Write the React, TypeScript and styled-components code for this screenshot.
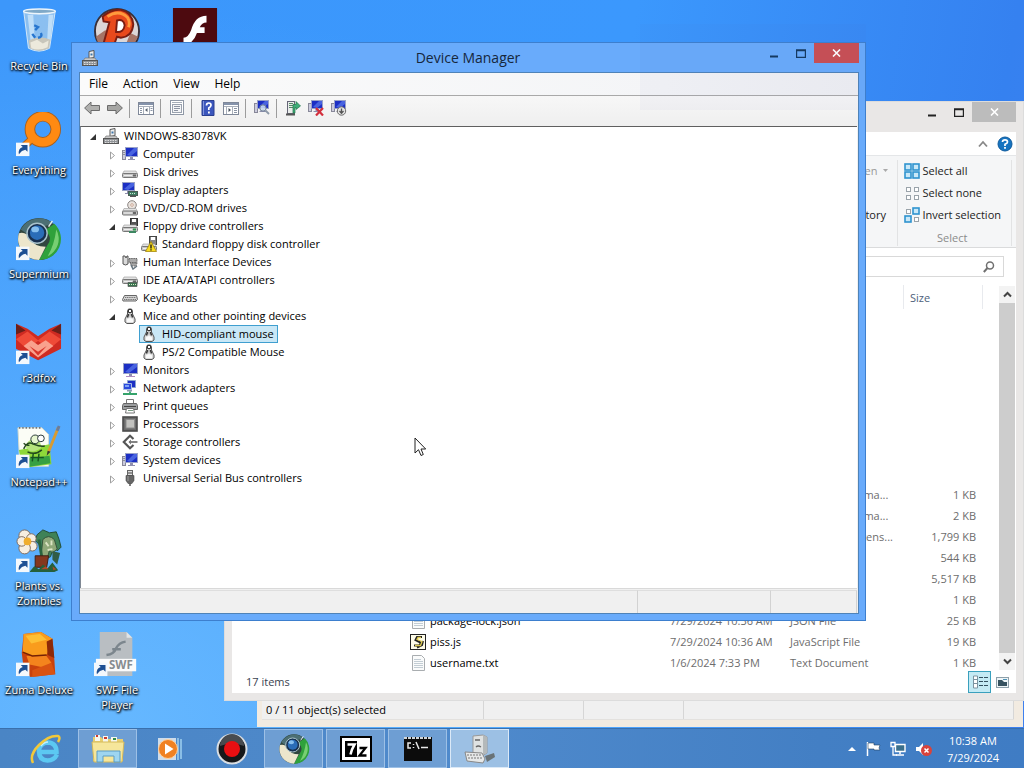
import React from "react";
import styled, { createGlobalStyle, css } from "styled-components";

const Global = createGlobalStyle`
  * { box-sizing: border-box; }
  html, body { margin: 0; padding: 0; }
  body, button, input, table {
    font-family: "Open Sans", "Noto Sans", sans-serif;
    font-size: 11px;
    line-height: 16px;
    color: #000;
  }
  button { border: 0; padding: 0; margin: 0; background: none; }
  ul { list-style: none; margin: 0; padding: 0; }
  svg { display: block; flex: none; }
`;

/* ---------- desktop ---------- */

const Screen = styled.div`
  display: flex;
  flex-direction: column;
  height: 100vh;
  overflow: hidden;
  background:
    radial-gradient(ellipse at 10% 95%, #66b8ff 0%, rgba(102, 184, 255, 0) 70%),
    linear-gradient(100deg, #3c97fb 0%, #3b98fd 55%, #3581f0 88%, #3f80ee 100%);
`;

const Area = styled.main`
  position: relative;
  flex: 1;
  min-height: 0;
`;

const IconGrid = styled.div`
  display: grid;
  grid-template-columns: repeat(3, 78px);
  grid-auto-rows: 104px;
  padding-top: 8px;
`;

const Shortcut = styled.button<{ $col: number; $row: number }>`
  grid-column: ${(p) => p.$col};
  grid-row: ${(p) => p.$row};
  display: flex;
  flex-direction: column;
  align-items: center;
  gap: 4px;
  padding: 0 2px;
  color: #fff;
  line-height: 15px;
  text-align: center;
  text-shadow: 0 1px 2px #000, 1px 1px 2px #000, 0 0 3px rgba(0, 0, 0, 0.7);
`;

/* ---------- window frames ---------- */

const winButton = css`
  display: flex;
  align-items: center;
  justify-content: center;
`;

const ArchiveWindow = styled.section`
  position: absolute;
  left: 257px;
  right: 1px;
  top: 140px;
  bottom: 1px;
  display: flex;
  flex-direction: column;
  justify-content: flex-end;
  padding: 0 9px 7px 5px;
  background: #f2ebe1;
`;

const ArchiveStatus = styled.div`
  display: flex;
  height: 20px;
  background: #f0f0f0;
  border-bottom: 1px solid #e3e1de;
`;

const ArchiveCell = styled.span<{ $width?: number }>`
  flex: ${(p) => (p.$width ? `0 0 ${p.$width}px` : "1")};
  padding: 2px 4px;
  border-right: 1px solid #d6d6d6;
`;

const Explorer = styled.section`
  position: absolute;
  left: 224px;
  right: 0;
  top: 101px;
  bottom: 27px;
  display: flex;
  flex-direction: column;
  padding: 0 7px 7px;
  background: #e9e7e6;
  border: 1px solid #dcdcdc;
`;

const ExplorerTitle = styled.header`
  display: flex;
  justify-content: flex-end;
  height: 30px;
`;

const ExplorerButton = styled.button<{ $close?: boolean }>`
  ${winButton}
  width: ${(p) => (p.$close ? 44 : 27)}px;
  height: 20px;
  background: ${(p) => (p.$close ? "#bcbcbc" : "transparent")};
`;

const TabRow = styled.div`
  display: flex;
  align-items: center;
  justify-content: flex-end;
  gap: 9px;
  height: 23px;
  padding-right: 3px;
  background: #fff;
`;

const Ribbon = styled.div`
  display: flex;
  justify-content: flex-end;
  height: 93px;
  padding: 4px 4px 1px;
  background: #f5f6f7;
  border-top: 1px solid #e4e6e8;
  border-bottom: 1px solid #dadbdc;
`;

const RibbonGroup = styled.div<{ $gap: number }>`
  display: flex;
  flex-direction: column;
  padding: 0 ${(p) => p.$gap}px 0 6px;
  border-right: 1px solid #e2e3e4;
`;

const RibbonButton = styled.button<{ $dim?: boolean }>`
  display: flex;
  align-items: center;
  gap: 3px;
  height: 22px;
  color: ${(p) => (p.$dim ? "#999" : "#222")};
`;

const RibbonCaption = styled.span`
  margin-top: auto;
  text-align: center;
  color: #8b8b8b;
`;

const AddressRow = styled.div`
  display: flex;
  justify-content: flex-end;
  padding: 8px 12px;
  background: #fff;
`;

const SearchBox = styled.label`
  display: flex;
  align-items: center;
  width: 220px;
  height: 21px;
  padding-right: 8px;
  border: 1px solid #d9d9d9;
`;

const SearchInput = styled.input`
  flex: 1;
  min-width: 0;
  border: 0;
  padding: 0 4px;
  outline: 0;
  background: transparent;
`;

const Body = styled.div`
  display: flex;
  flex: 1;
  min-height: 0;
  padding-left: 172px;
  background: #fff;
`;

const Listing = styled.div`
  display: flex;
  flex: 1;
  flex-direction: column;
  justify-content: space-between;
`;

const ColumnHeads = styled.div`
  display: flex;
  justify-content: flex-end;
  height: 24px;
  margin-right: 16px;
`;

const ColumnHead = styled.span<{ $width: number }>`
  width: ${(p) => p.$width}px;
  padding: 5px 6px;
  color: #4c607a;
  border-left: 1px solid #e8eaee;
  &:last-child { border-right: 1px solid #e8eaee; }
`;

const FileTable = styled.table`
  width: 100%;
  border-collapse: collapse;
  table-layout: fixed;
`;

const FileCell = styled.td<{ $right?: boolean; $name?: boolean }>`
  height: 21px;
  padding: 0 6px;
  padding-right: ${(p) => (p.$right ? 23 : 0)}px;
  text-align: ${(p) => (p.$right ? "right" : "left")};
  color: ${(p) => (p.$name ? "#000" : "#6d6d6d")};
  white-space: nowrap;
`;

const FileName = styled.span`
  display: flex;
  align-items: center;
  gap: 4px;
`;

const ScrollBar = styled.div`
  display: flex;
  flex-direction: column;
  width: 17px;
  padding: 1px 1px 3px 0;
`;

const ScrollButton = styled.button`
  ${winButton}
  height: 17px;
  background: #f3f3f3;
`;

const ScrollThumb = styled.div`
  flex: 1;
  background: #cdcdcd;
`;

const ExplorerStatus = styled.footer`
  display: flex;
  align-items: center;
  height: 20px;
  padding: 0 2px 2px 14px;
  background: #fff;
  color: #3a4250;
`;

const ViewButton = styled.button<{ $active?: boolean }>`
  ${winButton}
  width: 23px;
  height: 22px;
  border: 1px solid ${(p) => (p.$active ? "#3aa0bd" : "transparent")};
  background: ${(p) => (p.$active ? "#c4eaf4" : "transparent")};
`;

const Grow = styled.span`
  flex: 1;
`;

/* ---------- device manager ---------- */

const Manager = styled.section`
  position: absolute;
  left: 71px;
  right: 158px;
  top: 42px;
  bottom: 107px;
  display: flex;
  flex-direction: column;
  padding: 0 6px 6px 7px;
  background: #69abfb;
  border: 1px solid #3d7fce;
`;

const ManagerTitle = styled.header`
  display: grid;
  grid-template-columns: 108px 1fr 110px;
  height: 29px;
`;

const TitleIcon = styled.span`
  padding: 7px 3px;
`;

const TitleText = styled.h1`
  margin: 0;
  padding-top: 4px;
  font-size: 14px;
  font-weight: 400;
  line-height: 21px;
  text-align: center;
  color: #16273c;
`;

const TitleButtons = styled.div`
  display: flex;
  justify-content: flex-end;
`;

const ManagerButton = styled.button<{ $close?: boolean }>`
  ${winButton}
  width: ${(p) => (p.$close ? 45 : 27)}px;
  height: 20px;
  background: ${(p) => (p.$close ? "#c94f53" : "transparent")};
`;

const Client = styled.div`
  display: flex;
  flex: 1;
  flex-direction: column;
  min-height: 0;
  background: #f0f0f0;
  border: 1px solid #4f83b8;
`;

const MenuBar = styled.nav`
  display: flex;
  height: 23px;
  padding-left: 2px;
  background: linear-gradient(90deg, #fbfbfb, #f4f5f7 75%, #eff0f3);
  border-bottom: 1px solid #a9a9a9;
`;

const MenuItem = styled.button`
  padding: 0 8px 0 7px;
  font-size: 12px;
`;

const ToolBar = styled.div`
  display: flex;
  align-items: center;
  height: 30px;
  padding-bottom: 6px;
  background: linear-gradient(#f7f7f7, #efefef);
`;

const ToolButton = styled.button`
  ${winButton}
  width: 23px;
  height: 22px;
`;

const Divider = styled.span`
  width: 1px;
  height: 19px;
  margin: 0 4px 0 3px;
  background: #9c9c9c;
`;

const TreePane = styled.div`
  flex: 1;
  min-height: 0;
  margin-right: 1px;
  overflow: hidden;
  background: #fff;
  border-top: 1px solid #5f5f5f;
  border-left: 1px solid #7f8894;
`;

const TreeRow = styled.li<{ $level: number }>`
  display: flex;
  align-items: center;
  height: 18px;
  padding-left: ${(p) => 7 + p.$level * 19}px;
`;

const Expander = styled.span`
  ${winButton}
  width: 10px;
  height: 16px;
  padding-top: 2px;
  margin-right: 3px;
`;

const TreeItem = styled.button<{ $selected?: boolean }>`
  display: flex;
  align-items: center;
  gap: 5px;
  height: 18px;
  padding: 0 3px 0 1px;
  border: 1px solid ${(p) => (p.$selected ? "#3f9fd0" : "transparent")};
  background: ${(p) => (p.$selected ? "#c9e7f6" : "transparent")};
  white-space: nowrap;
`;

const StatusBar = styled.footer`
  display: grid;
  grid-template-columns: 1fr 133px 86px;
  height: 25px;
  margin-right: 1px;
  padding-top: 1px;
  border-top: 1px solid #d9d9d9;
`;

const StatusCell = styled.span`
  border-top: 1px solid #dedede;
  border-right: 1px solid #d2d2d2;
`;

const Ghost = styled.div`
  position: absolute;
  right: 158px;
  top: 24px;
  width: 226px;
  height: 86px;
  background: rgba(110, 110, 170, 0.04);
  pointer-events: none;
`;

const Pointer = styled.div`
  position: absolute;
  left: 414px;
  top: 437px;
`;

/* ---------- taskbar ---------- */

const TaskBar = styled.footer`
  position: relative;
  display: flex;
  flex: none;
  align-items: stretch;
  height: 40px;
  padding-left: 16px;
  background: linear-gradient(90deg, #4a85c5, #4f8acc 45%, #437fc4 80%, #3f7cc4);
  border-top: 1px solid #3a70ac;
`;

const Tasks = styled.div`
  display: flex;
  flex: 1;
  gap: 3px;
`;

const Task = styled.button<{ $state?: "open" | "active" }>`
  ${winButton}
  width: 59px;
  border: 1px solid transparent;
  ${(p) => p.$state === "open" && css`background: #6e9ed3; border-color: #9dc0e6;`}
  ${(p) => p.$state === "active" && css`background: #9cc0e4; border-color: #dbe9f7;`}
`;

const Tray = styled.div`
  display: flex;
  align-items: center;
  gap: 9px;
  padding-right: 24px;
`;

const Clock = styled.time`
  width: 54px;
  margin-left: 4px;
  line-height: 17px;
  text-align: center;
  white-space: nowrap;
  color: #fff;
`;

/* ---------- device drawings, all on a 16 unit grid ---------- */

const Monitor = ({ x = 0, y = 0, w = 12, h = 8 }) => (
  <g>
    <rect x={x + 0.5} y={y + 0.5} width={w} height={h} fill="#1c2fc4" stroke="#9aa2c8" />
    <path d={`M${x + 2} ${y + h - 1}L${x + w - 3} ${y + 1}H${x + w}V${y + 4}L${x + 6} ${y + h}Z`} fill="#4863e0" />
    <path d={`M${x + w / 2 - 1} ${y + h + 1}h3v2h2v1h-7v-1h2z`} fill="#8f8fae" />
  </g>
);

const Drive = ({ x = 0, y = 9, green = false }) => (
  <g>
    <path d={`M${x + 2} ${y}H${x + 14}L${x + 15.5} ${y + 3}H${x + 0.5}Z`} fill="#e3e3e3" stroke="#999" strokeWidth=".6" />
    <rect x={x + 0.5} y={y + 2.5} width="15" height="4" rx="1" fill="#c4c4c4" stroke="#777" />
    <path d={`M${x + 2} ${y + 4.5}h8`} stroke="#eee" />
    <rect x={x + 11} y={y + 3.5} width="3" height="2" fill={green ? "#2c9a4b" : "#666"} />
  </g>
);

const MouseBody = () => (
  <g>
    <path d="M5.500 3l1-2h3l1 2v3l2.500 5v3L11 15.500H5L3 14v-3l2.500-5z" fill="#dcdcdc" stroke="#555" />
    <path d="M6.500 1.500h3v3h-3z" fill="#fff" stroke="#333" />
    <path d="M6.500 6L5.500 9.500M9.500 6l1 3.500" stroke="#333" strokeWidth="1.500" />
    <path d="M5 11.500q3-3 6 0V14H5z" fill="#fafafa" />
    <path d="M8 5v3.500" stroke="#999" />
  </g>
);

const drawings: Record<string, React.ReactNode> = {
  root: (
    <g>
      <path d="M7 1.500l5-1v7l-5 1z" fill="#eee" stroke="#555" />
      <path d="M8.500 3.500h2v2h-2z" fill="#3c75a8" />
      <path d="M3 8h10l2 3H1z" fill="#c9c9c9" stroke="#777" strokeWidth=".7" />
      <rect x=".5" y="10.500" width="15" height="5" fill="#8f9296" stroke="#555" />
      <path d="M2 12.500h12M2 14.500h12" stroke="#ddd" strokeDasharray="1.500 1" />
    </g>
  ),
  computer: (
    <g>
      <rect x=".5" y="4.500" width="3" height="9" fill="#ccd" stroke="#889" />
      <path d="M1.500 6.500h1M1.500 8.500h1" stroke="#555" />
      <Monitor x={3} y={1} w={12} h={9} />
    </g>
  ),
  disk: <Drive y={7} />,
  display: (
    <g>
      <Monitor x={0} y={0} w={12} h={8} />
      <rect x="6.500" y="9.500" width="9" height="4" fill="#3f7f63" stroke="#4b5b55" />
      <path d="M8 11.500h6" stroke="#cfe6d7" strokeDasharray="1 1" />
      <path d="M8 14.500h6" stroke="#555" />
    </g>
  ),
  dvd: (
    <g>
      <circle cx="10" cy="5" r="4.300" fill="#e9e3de" stroke="#8b8582" />
      <circle cx="10" cy="5" r="1.300" fill="#fff" stroke="#b98a70" strokeWidth=".7" />
      <Drive y={8.500} />
    </g>
  ),
  floppyCtl: (
    <g>
      <rect x="8.500" y=".5" width="7" height="7" fill="#555" stroke="#333" />
      <path d="M10 1h4v3h-4z" fill="#fff" />
      <Drive y={7} green />
      <path d="M7 13h7v2H7z" fill="#3d8762" />
    </g>
  ),
  floppyWarn: (
    <g>
      <rect x="8.500" y=".5" width="7" height="8" fill="#888" stroke="#444" />
      <path d="M10 1h4v3h-4z" fill="#fff" />
      <Drive y={8} />
      <path d="M10 5.500l5.500 10h-11z" fill="#f8dc20" stroke="#a5860c" strokeWidth=".8" />
      <path d="M10 8.500v4M10 13.300v1.200" stroke="#111" strokeWidth="1.300" />
    </g>
  ),
  hid: (
    <g>
      <path d="M1 2h2l1 2 1-2h1v8q-2.500 2-5 0z" fill="#d9d9d9" stroke="#555" />
      <path d="M7 4.500h8v4H7zM8 9h7l-1 3h-4z" fill="#aaa" stroke="#666" strokeDasharray="1.500 .7" />
      <path d="M9 11l2 4 4-3" fill="none" stroke="#66757f" strokeWidth="1.500" />
    </g>
  ),
  ide: (
    <g>
      <Drive y={5} />
      <path d="M6 10.500h9v4H6z" fill="#39744f" stroke="#555" strokeWidth=".7" />
      <path d="M7 12.500h7" stroke="#d6e8c8" strokeDasharray="1 1" />
    </g>
  ),
  keyboard: (
    <g>
      <path d="M2.500 5.500h12l1 4-1.500 1.500H1L.5 9.500z" fill="#d4d4d4" stroke="#666" />
      <path d="M3 7.500h11M2 9.500h12" stroke="#777" strokeDasharray="1.200 .6" />
    </g>
  ),
  mouse: <MouseBody />,
  monitor: (
    <g>
      <Monitor x={1} y={1} w={14} h={10} />
      <path d="M4 14.500h9" stroke="#b08cc0" />
    </g>
  ),
  network: (
    <g>
      <path d="M5.500.5h8v7h-8z" fill="#1c2fc4" stroke="#8aa4d0" />
      <path d="M1.500 3.500h8v6h-8z" fill="#2a49dc" stroke="#a9bbe4" />
      <path d="M3 5h4v2H3z" fill="#7fa3f4" />
      <path d="M5 10h5v1.500H5z" fill="#8f9ab0" />
      <path d="M1 14h14M8 11.500v3" stroke="#35a36b" strokeWidth="1.800" />
    </g>
  ),
  printer: (
    <g>
      <path d="M4.500 1.500h7v4h-7z" fill="#fff" stroke="#777" />
      <path d="M1.500 5.500h13l1 2v4H.5v-4z" fill="#9c9ea0" stroke="#666" />
      <path d="M2 8.500h12" stroke="#444" />
      <path d="M4.500 10.500h7l1 4.500h-9z" fill="#fff" stroke="#777" />
      <path d="M6 12.500h5" stroke="#7a9b84" />
    </g>
  ),
  cpu: (
    <g>
      <rect x="1" y="1" width="14" height="14" fill="#6b6b6b" stroke="#4b4b4b" strokeWidth="1.600" />
      <rect x="4" y="3.500" width="8.500" height="8.500" fill="#c2c2bf" stroke="#8c8c8c" />
    </g>
  ),
  storage: (
    <g fill="none">
      <path d="M11.500 5L8 1.800 1.800 8 8 14.200 11.500 11" stroke="#555" strokeWidth="2.200" />
      <path d="M7 8h8.500" stroke="#777" strokeWidth="1.800" />
      <path d="M9 5.500L6.500 8 9 10.500z" fill="#777" />
    </g>
  ),
  usb: (
    <g>
      <rect x="5.500" y=".5" width="5" height="5" fill="#ddd" stroke="#666" />
      <path d="M7 2v2M9 2v2" stroke="#444" />
      <path d="M4 5.500h8v5l-2 3H6l-2-3z" fill="#666" stroke="#4a4a4a" strokeWidth=".6" />
      <path d="M6 6v5" stroke="#9a9a9a" />
      <path d="M8 13v3" stroke="#555" strokeWidth="1.500" />
    </g>
  ),
  back: <path d="M.6 8L7 2v3.500h8.500v5H7V14z" fill="#b0b0ae" stroke="#6b6b6b" />,
  forward: <path d="M15.400 8L9 2v3.500H.5v5H9V14z" fill="#a5a5a3" stroke="#6b6b6b" />,
  panel: (
    <g>
      <rect x=".5" y="2.500" width="15" height="12" fill="#fff" stroke="#7f8899" />
      <path d="M1 4h14" stroke="#8593ab" strokeWidth="2" />
      <path d="M5.500 6v8M11.500 6v8M1 6.500h14" stroke="#a9b0bb" />
      <path d="M2 8.500h2M2 10.500h2M2 12.500h2M12.500 8.500h2M12.500 10.500h2" stroke="#8b95a5" />
      <path d="M9.500 8v4L7 10z" fill="#55606e" />
    </g>
  ),
  panelRight: (
    <g>
      <rect x=".5" y="2.500" width="15" height="12" fill="#fff" stroke="#7f8899" />
      <path d="M1 4h14" stroke="#8593ab" strokeWidth="2" />
      <path d="M3.500 6v8M9.500 6v8M1 6.500h14" stroke="#a9b0bb" />
      <path d="M11 8.500h3M11 10.500h3M11 12.500h3" stroke="#8b95a5" />
      <path d="M5.500 8v4L8 10z" fill="#44505e" />
    </g>
  ),
  properties: (
    <g>
      <rect x="1.500" y=".5" width="13" height="14" fill="#fff" stroke="#8f98a6" />
      <path d="M3 2.500h10" stroke="#a6aeb9" />
      <rect x="3.500" y="4.500" width="9" height="8" fill="#f4f5f7" stroke="#9aa2af" />
      <path d="M5 6.500h6M5 8.500h6M5 10.500h4" stroke="#8b93a2" />
    </g>
  ),
  help: (
    <g>
      <path d="M2 .5h12v15H2z" fill="#3b56bd" stroke="#2a3e8e" />
      <path d="M3.500 1v14" stroke="#8395dc" />
      <path d="M6.500 5.500Q6.500 3 8.800 3T11 5.300Q11 6.800 8.800 8v2" fill="none" stroke="#fff" strokeWidth="1.700" />
      <path d="M8 11.500h1.800v2H8z" fill="#fff" />
    </g>
  ),
  scan: (
    <g>
      <rect x=".5" y="3.500" width="3" height="9" fill="#ccd" stroke="#889" />
      <Monitor x={3} y={0} w={11} h={8} />
      <circle cx="9" cy="8" r="3.200" fill="#d5e6f5" fillOpacity=".8" stroke="#6a7a90" />
      <path d="M11.500 10.500L15 14" stroke="#8d99a8" strokeWidth="1.800" />
    </g>
  ),
  update: (
    <g>
      <rect x="2.500" y="1.500" width="7" height="12" fill="#e9ecea" stroke="#667" />
      <path d="M4 3.500h4M4 5.500h4M4 7.500h4" stroke="#586" />
      <path d="M1 14.500h9" stroke="#555" strokeWidth="2" />
      <path d="M8 13V4.500h3V1.500L15.500 6 11 9.500V7.500h-1V13z" fill="#3fae79" stroke="#24734b" strokeWidth=".7" />
    </g>
  ),
  uninstall: (
    <g>
      <rect x=".5" y="3.500" width="3" height="8" fill="#ccd" stroke="#889" />
      <Monitor x={3} y={0} w={11} h={8} />
      <path d="M8 8l7 7.500M15 8l-7 7.500" stroke="#d32f3d" strokeWidth="2.200" />
    </g>
  ),
  disable: (
    <g>
      <rect x=".5" y="3.500" width="3" height="8" fill="#ccd" stroke="#889" />
      <Monitor x={3} y={0} w={11} h={8} />
      <circle cx="10.500" cy="11" r="4.200" fill="#e3e3e3" stroke="#6a6a6a" />
      <path d="M10.500 8.500v4M8.500 11l2 2.300 2-2.300" fill="none" stroke="#555" strokeWidth="1.300" />
    </g>
  ),
};

const Icon = ({ name, size = 16 }: { name: string; size?: number }) => (
  <svg width={size} height={size} viewBox="0 0 16 16" aria-hidden="true">
    {drawings[name]}
  </svg>
);

/* ---------- shortcut pictures, on a 48 unit grid ---------- */

const LinkBadge = () => (
  <g>
    <rect x="0" y="32" width="14" height="14" fill="#f4f8fc" />
    <path d="M3 44q-1-6 4-7.500L5 34.500h7v7l-2.200-2Q6 40 3 44z" fill="#1d4f93" />
  </g>
);

const Orb = () => (
  <g>
    <circle cx="24" cy="24" r="22" fill="#31463f" />
    <path d="M40 8a22 22 0 0 1-16 38L33 30q6-8-3-15z" fill="#2fa13b" />
    <path d="M42 14a20 20 0 0 1-9 28q7-12 9-28z" fill="#77cf73" />
    <path d="M3 18q8-2 12 6 4 8 16 8l-7 14A22 22 0 0 1 3 18z" fill="#ece6cc" />
    <path d="M5 14a22 22 0 0 1 34-6L28 11Q16 8 12 19z" fill="#4c6f74" />
    <circle cx="22" cy="18" r="10.500" fill="#18304f" stroke="#aac3cc" strokeWidth="1.500" />
    <circle cx="22" cy="17.500" r="7.500" fill="#2a6db8" />
    <ellipse cx="20" cy="14" rx="4" ry="3" fill="#86bfee" />
    <path d="M34 11l4-6" stroke="#e5eee8" strokeWidth="1.500" />
  </g>
);

const pictures: Record<string, React.ReactNode> = {
  bin: (
    <g>
      <path d="M8 3l5 39q11 6 22 0l6-39q-17 6-33 0z" fill="#9fc9ee" fillOpacity=".8" stroke="#d6e9f8" />
      <path d="M12 7l4 34 4 2-2-36zM34 7l-2 36 3-2 4-34z" fill="#d5ebfb" fillOpacity=".7" />
      <path d="M13 34q11-6 23-1l-1.500 9q-11 5-20 0z" fill="#c8c6bb" />
      <path d="M15 36l7-3 6 4 6-3-1 7q-9 4-17 1z" fill="#ece9dc" />
      <ellipse cx="24.500" cy="3.500" rx="16.500" ry="2.500" fill="#7fa9c8" stroke="#edf5fb" strokeWidth="1.500" />
      <path d="M19 18l4 2-3 3M26 26q2 4-3 5M17 27l3 4" fill="none" stroke="#2876cf" strokeWidth="2.500" />
    </g>
  ),
  pea: (
    <g>
      <circle cx="24" cy="24" r="23" fill="#dcd7d8" stroke="#38303a" strokeWidth="2" />
      <path d="M2 30l10-7 6 12-4 10Q5 42 2 30zM46 30l-8-4-4 10 4 8z" fill="#a67466" />
      <path d="M9 9Q18 1 28 2q12 3 13 15-1 13-13 14l-4-1-4 11-10-4 6-22-6-1z" fill="#e8491c" stroke="#7a1d12" strokeWidth="2" />
      <path d="M14 9q12-8 21 1 3 5 1 10" fill="none" stroke="#ff9a3c" strokeWidth="3" />
      <path d="M24 13q7-2 8 5-1 8-9 7z" fill="#fff" stroke="#7a1d12" strokeWidth="2" />
    </g>
  ),
  flash: (
    <g>
      <rect x="1" y="0" width="46" height="44" fill="#4d0a0f" />
      <path d="M36 8v7q-5 0-7 5h5v6h-8q-4 12-14 12v-7q5 0 8-8 4-15 16-15z" fill="#fff" />
    </g>
  ),
  everything: (
    <g>
      <circle cx="28" cy="18" r="13.500" fill="none" stroke="#a7601f" strokeWidth="11" />
      <path d="M18 27L6 38" stroke="#a7601f" strokeWidth="8" />
      <circle cx="28" cy="18" r="13.500" fill="none" stroke="#ff8a12" strokeWidth="9" />
      <path d="M19 26L7 37" stroke="#ff8a12" strokeWidth="6" />
      <LinkBadge />
    </g>
  ),
  supermium: (
    <g>
      <Orb />
      <LinkBadge />
    </g>
  ),
  fox: (
    <g>
      <path d="M0 4l12 5 11 8 12-8 12-5v26L23 42 0 30z" fill="#cf2b22" />
      <path d="M0 4l10 7L0 15zM47 4l-10 7 10 4z" fill="#6b2019" />
      <path d="M0 20l12-8 11 9 12-9 12 8-12 10-12-8-12 8z" fill="#ef4b38" />
      <path d="M8 27l8-6 7 5 8-5 8 6-16 12z" fill="#f9a18d" />
      <path d="M14 27l9 6 9-6-9 10z" fill="#d9352a" />
      <LinkBadge />
    </g>
  ),
  notepad: (
    <g>
      <path d="M2 4h25l7 7v33H4z" fill="#fbfdf6" stroke="#d6dccf" />
      <path d="M3 27l32-6 2 21-30 4z" fill="#8ed83a" />
      <path d="M4 37l31-4 1 8-30 5z" fill="#36a043" />
      <path d="M3 4h24" stroke="#777" strokeWidth="2" strokeDasharray="1.500 2" />
      <path d="M10 24q2-9 10-8 7 2 6 9-7 5-12 3z" fill="#b5e37c" />
      <circle cx="20" cy="16" r="4.500" fill="#e6f6cf" stroke="#233" />
      <circle cx="26" cy="15" r="3.500" fill="#fff" stroke="#233" />
      <path d="M8 26q4-9 10-5 8 3 12 2M12 29q8 4 15-2M8 20q3 3 6 2" fill="none" stroke="#23471d" strokeWidth="1.500" />
      <path d="M18 31l-1 8M24 31l-1 8M15 35h14" stroke="#175421" strokeWidth="1.500" />
      <path d="M34 29L44 4" stroke="#d89b32" strokeWidth="3" />
      <path d="M43 7l2-5" stroke="#6d7d99" strokeWidth="3" />
      <path d="M32 33l1-5 3 1z" fill="#333" />
      <LinkBadge />
    </g>
  ),
  plants: (
    <g>
      <path d="M22 7l6-5 7 3 7-1 3 8 2 8-4 4-3-6-4 12-9 4-2-16-5-5z" fill="#3f8257" stroke="#204a33" />
      <path d="M28 12q6-6 12 0l3 10-5 4-3-3-3 11-6-3z" fill="#8fa879" stroke="#35503a" />
      <path d="M31 15l3 4M37 13v5M33 23l5-1" stroke="#dce4c4" strokeWidth="2" />
      <path d="M38 24l8 2-3 12-5-5z" fill="#315c46" />
      <path d="M24 12l3 19" stroke="#2a633f" strokeWidth="3" />
      <g fill="#f6eee2" stroke="#7d6a5d">
        <circle cx="9" cy="8" r="6" />
        <circle cx="16" cy="11" r="5" />
        <circle cx="17" cy="19" r="5" />
        <circle cx="9" cy="21" r="6" />
        <circle cx="6" cy="14" r="5" />
      </g>
      <circle cx="12" cy="14" r="4" fill="#efad2f" />
      <path d="M20 29h14l-2 12H20z" fill="#84371f" stroke="#3d2015" />
      <path d="M14 46l5-6 5 3 4-5 5 4 5-6 6 8-4 2z" fill="#26603b" />
      <path d="M26 43l5-3 3 3zM38 40l4 3-3 1z" fill="#b04a2a" />
      <LinkBadge />
    </g>
  ),
  zuma: (
    <g>
      <path d="M8 2l18-2 12 7 2 22 1 15-26 3-7-9-2-16z" fill="#c9420d" />
      <path d="M8 2l18-2 12 7-6 17-15 1-10-4z" fill="#f99c1d" />
      <path d="M10 4l15-2 7 6-16 4z" fill="#fdbf35" />
      <path d="M32 10l6-3 2 20-7-3z" fill="#8d2a08" />
      <path d="M11 25l20-1 6 8-8 5-15-3z" fill="#f4841d" />
      <path d="M17 40l20-8 4 12-24 3z" fill="#d95312" />
      <path d="M7 21l10 4 15-1" fill="none" stroke="#752205" strokeWidth="1.500" />
      <LinkBadge />
    </g>
  ),
  swf: (
    <g>
      <path d="M6 0h28l6 6v40H6z" fill="#b9bec2" />
      <path d="M34 0v6h6z" fill="#e1e4e6" />
      <path d="M13 24q8-1 10-7 3-6 10-7M19 18h9" fill="none" stroke="#7c868d" strokeWidth="2.500" />
      <rect x="2" y="28" width="42" height="13" fill="#fbfbfb" />
      <text x="28" y="39" textAnchor="middle" fontSize="12" fontWeight="700" fontFamily="Open Sans, sans-serif" fill="#878c90">
        SWF
      </text>
      <LinkBadge />
    </g>
  ),
};

const PictureFrame = styled.svg`
  text-shadow: none;
`;

const Picture = ({ name }: { name: string }) => (
  <PictureFrame width="46" height="46" viewBox="0 0 48 48" aria-hidden="true">
    {pictures[name]}
  </PictureFrame>
);

const MinGlyph = ({ color }: { color: string }) => (
  <svg width="10" height="10"><path d="M1 8.500h8" stroke={color} strokeWidth="2" /></svg>
);
const MaxGlyph = ({ color }: { color: string }) => (
  <svg width="10" height="9"><path d="M.5 1.500h9v7h-9z M0 1h10" fill="none" stroke={color} strokeWidth="1.400" /></svg>
);
const CloseGlyph = () => (
  <svg width="9" height="8"><path d="M1 .5l7 7M8 .5l-7 7" stroke="#fff" strokeWidth="1.600" /></svg>
);

/* ---------- content ---------- */

const shortcuts = [
  { name: "bin", label: "Recycle Bin", col: 1, row: 1 },
  { name: "everything", label: "Everything", col: 1, row: 2 },
  { name: "supermium", label: "Supermium", col: 1, row: 3 },
  { name: "fox", label: "r3dfox", col: 1, row: 4 },
  { name: "notepad", label: "Notepad++", col: 1, row: 5 },
  { name: "plants", label: "Plants vs. Zombies", col: 1, row: 6 },
  { name: "zuma", label: "Zuma Deluxe", col: 1, row: 7 },
  { name: "pea", label: "", col: 2, row: 1 },
  { name: "flash", label: "", col: 3, row: 1 },
  { name: "swf", label: "SWF File Player", col: 2, row: 7 },
];

type Node = { label: string; icon: string; level: number; open?: boolean; selected?: boolean };

const nodes: Node[] = [
  { label: "WINDOWS-83078VK", icon: "root", level: 0, open: true },
  { label: "Computer", icon: "computer", level: 1 },
  { label: "Disk drives", icon: "disk", level: 1 },
  { label: "Display adapters", icon: "display", level: 1 },
  { label: "DVD/CD-ROM drives", icon: "dvd", level: 1 },
  { label: "Floppy drive controllers", icon: "floppyCtl", level: 1, open: true },
  { label: "Standard floppy disk controller", icon: "floppyWarn", level: 2 },
  { label: "Human Interface Devices", icon: "hid", level: 1 },
  { label: "IDE ATA/ATAPI controllers", icon: "ide", level: 1 },
  { label: "Keyboards", icon: "keyboard", level: 1 },
  { label: "Mice and other pointing devices", icon: "mouse", level: 1, open: true },
  { label: "HID-compliant mouse", icon: "mouse", level: 2, selected: true },
  { label: "PS/2 Compatible Mouse", icon: "mouse", level: 2 },
  { label: "Monitors", icon: "monitor", level: 1 },
  { label: "Network adapters", icon: "network", level: 1 },
  { label: "Print queues", icon: "printer", level: 1 },
  { label: "Processors", icon: "cpu", level: 1 },
  { label: "Storage controllers", icon: "storage", level: 1 },
  { label: "System devices", icon: "computer", level: 1 },
  { label: "Universal Serial Bus controllers", icon: "usb", level: 1 },
];

const files = [
  ["", "", "Windows Comma...", "1 KB"],
  ["", "", "Windows Comma...", "2 KB"],
  ["", "", "Application extens...", "1,799 KB"],
  ["", "", "", "544 KB"],
  ["", "", "", "5,517 KB"],
  ["", "", "", "1 KB"],
  ["package-lock.json", "7/29/2024 10:36 AM", "JSON File", "25 KB"],
  ["piss.js", "7/29/2024 10:36 AM", "JavaScript File", "19 KB"],
  ["username.txt", "1/6/2024 7:33 PM", "Text Document", "1 KB"],
];

const tools = [
  "back", "forward", "|", "panel", "|", "properties", "|", "help", "panelRight", "|", "scan", "|", "update", "uninstall", "disable",
];

const SheetIcon = ({ script }: { script: boolean }) =>
  script ? (
    <svg width="16" height="16" aria-hidden="true">
      <rect x=".5" y=".5" width="15" height="15" fill="#fdfbe8" stroke="#222" />
      <path d="M12 3H7L5.500 6l5 2.500-1 3H4M7 13.500l5-2.500 1-4" fill="none" stroke="#222" strokeWidth="2" />
      <path d="M11 3.500H8l-1 2 5 2-1.500 4H5" fill="none" stroke="#dcc84f" strokeWidth="1.300" />
    </svg>
  ) : (
    <svg width="16" height="16" aria-hidden="true">
      <path d="M2.500.5h9l3 3v12h-12z" fill="#fafbfb" stroke="#a9adb0" />
      <path d="M4 4.500h7M4 6.500h9M4 8.500h9M4 10.500h9M4 12.500h9" stroke="#c3cdd4" />
    </svg>
  );

const SelectGlyph = ({ on }: { on: boolean[] }) => (
  <svg width="16" height="16" aria-hidden="true">
    {on.map((lit, i) => {
      const x = (i % 2) * 8 + 1;
      const y = Math.floor(i / 2) * 8 + 1;
      return lit ? (
        <rect key={i} x={x} y={y} width="6" height="6" fill="#c9e8f8" stroke="#2f93cf" strokeWidth="1.600" />
      ) : (
        <rect key={i} x={x + 1.500} y={y + 1.500} width="4" height="4" fill="#fff" stroke="#9aa3aa" />
      );
    })}
  </svg>
);

const ExplorerPanel = () => (
  <Explorer aria-label="File Explorer">
    <ExplorerTitle>
      <ExplorerButton aria-label="Minimize"><MinGlyph color="#222" /></ExplorerButton>
      <ExplorerButton aria-label="Maximize"><MaxGlyph color="#222" /></ExplorerButton>
      <ExplorerButton $close aria-label="Close"><CloseGlyph /></ExplorerButton>
    </ExplorerTitle>
    <TabRow>
      <svg width="10" height="8"><path d="M1 6.500L5 2l4 4.500" fill="none" stroke="#888" strokeWidth="1.800" /></svg>
      <svg width="16" height="16">
        <circle cx="8" cy="8" r="7" fill="#1673c0" stroke="#0d5a9c" />
        <path d="M5.500 6Q5.500 3.800 8 3.800T10.500 6Q10.500 7.200 8 8.300V10" fill="none" stroke="#fff" strokeWidth="1.700" />
        <path d="M7.100 11h1.800v1.800H7.100z" fill="#fff" />
      </svg>
    </TabRow>
    <Ribbon>
      <RibbonGroup $gap={8}>
        <RibbonButton $dim>
          Open
          <svg width="8" height="6"><path d="M2 1h5L4.500 4z" fill="#aaa" /></svg>
        </RibbonButton>
        <RibbonButton $dim aria-label="Edit" />
        <RibbonButton>History</RibbonButton>
      </RibbonGroup>
      <RibbonGroup $gap={10}>
        <RibbonButton><SelectGlyph on={[true, true, true, true]} />Select all</RibbonButton>
        <RibbonButton><SelectGlyph on={[false, false, false, false]} />Select none</RibbonButton>
        <RibbonButton><SelectGlyph on={[false, true, true, false]} />Invert selection</RibbonButton>
        <RibbonCaption>Select</RibbonCaption>
      </RibbonGroup>
    </Ribbon>
    <AddressRow>
      <SearchBox>
        <SearchInput type="search" aria-label="Search" />
        <svg width="12" height="12"><circle cx="7" cy="4.500" r="3.500" fill="none" stroke="#707070" strokeWidth="1.500" /><path d="M4.500 7L.8 11" stroke="#707070" strokeWidth="2" /></svg>
      </SearchBox>
    </AddressRow>
    <Body>
      <Listing>
        <ColumnHeads>
          <ColumnHead $width={80}>Size</ColumnHead>
        </ColumnHeads>
        <FileTable>
          <colgroup>
            <col />
            <col width="120" />
            <col width="120" />
            <col width="95" />
          </colgroup>
          <tbody>
            {files.map(([name, date, type, size], i) => (
              <tr key={i}>
                <FileCell $name>
                  {name && <FileName><SheetIcon script={name.endsWith(".js")} />{name}</FileName>}
                </FileCell>
                <FileCell>{date}</FileCell>
                <FileCell>{type}</FileCell>
                <FileCell $right>{size}</FileCell>
              </tr>
            ))}
          </tbody>
        </FileTable>
      </Listing>
      <ScrollBar>
        <ScrollButton aria-label="Scroll up"><svg width="9" height="7"><path d="M1 5.500L4.500 2 8 5.500" fill="none" stroke="#444" strokeWidth="2" /></svg></ScrollButton>
        <ScrollThumb />
        <ScrollButton aria-label="Scroll down"><svg width="9" height="7"><path d="M1 1.500L4.500 5 8 1.500" fill="none" stroke="#444" strokeWidth="2" /></svg></ScrollButton>
      </ScrollBar>
    </Body>
    <ExplorerStatus>
      17 items
      <Grow />
      <ViewButton $active aria-label="Details view">
        <svg width="16" height="14"><path d="M1.500 1v12h4V1zM1 4.500h5M1 8.500h5" fill="#fff" stroke="#7c93a0" /><path d="M7 2.500h9M7 6.500h9M7 10.500h9" stroke="#33505e" strokeWidth="1.200" strokeDasharray="4 1" /></svg>
      </ViewButton>
      <ViewButton aria-label="Thumbnail view">
        <svg width="13" height="11"><rect x=".5" y=".5" width="12" height="10" fill="#eef4f6" stroke="#8ea0aa" /><path d="M2 3h4l2 2h3v4H2z" fill="#37525f" /><path d="M7 2.500h4" stroke="#4d93b8" /></svg>
      </ViewButton>
    </ExplorerStatus>
  </Explorer>
);

const ManagerPanel = () => (
  <Manager aria-label="Device Manager">
    <ManagerTitle>
      <TitleIcon><Icon name="root" /></TitleIcon>
      <TitleText>Device Manager</TitleText>
      <TitleButtons>
        <ManagerButton aria-label="Minimize"><MinGlyph color="#12385e" /></ManagerButton>
        <ManagerButton aria-label="Maximize"><MaxGlyph color="#12385e" /></ManagerButton>
        <ManagerButton $close aria-label="Close"><CloseGlyph /></ManagerButton>
      </TitleButtons>
    </ManagerTitle>
    <Client>
      <MenuBar>
        {["File", "Action", "View", "Help"].map((m) => <MenuItem key={m}>{m}</MenuItem>)}
      </MenuBar>
      <ToolBar>
        {tools.map((t, i) => t === "|" ? <Divider key={i} /> : <ToolButton key={i} aria-label={t}><Icon name={t} /></ToolButton>)}
      </ToolBar>
      <TreePane>
        <ul role="tree">
          {nodes.map((n) => (
            <TreeRow key={n.label} $level={n.level} role="treeitem" aria-selected={!!n.selected}>
              <Expander>
                {n.level < 2 && (
                  <svg width="8" height="9">
                    {n.open ? <path d="M7 1v6H1z" fill="#333" /> : <path d="M2.500 1v7l4-3.500z" fill="#fff" stroke="#a0a0a0" />}
                  </svg>
                )}
              </Expander>
              <TreeItem $selected={n.selected}><Icon name={n.icon} />{n.label}</TreeItem>
            </TreeRow>
          ))}
        </ul>
      </TreePane>
      <StatusBar><StatusCell /><StatusCell /><StatusCell /></StatusBar>
    </Client>
  </Manager>
);

const TaskIcons: Record<string, React.ReactNode> = {
  ie: (
    <svg width="32" height="32" viewBox="0 0 32 32">
      <path d="M27 21.500q-3 6-9.500 6Q9 27 9 18.500T18 9.500Q26.500 10 26.500 19H11" fill="none" stroke="#5cc8f2" strokeWidth="4.500" />
      <path d="M11 13q3-4 7-4" fill="none" stroke="#c3eefd" strokeWidth="1.500" />
      <path d="M3 30Q-1 22 9 12T28 3q3 1 0 6" fill="none" stroke="#f2c83a" strokeWidth="2.500" />
    </svg>
  ),
  folder: (
    <svg width="34" height="30" viewBox="0 0 34 30">
      <path d="M2 3h8l2 2h20v22H2z" fill="#e9cf70" />
      <path d="M4 1h5v6H4zM12 2h5v6h-5zM20 3h6v6h-6z" fill="#f7f7ee" />
      <path d="M5 2h2M13 4h3" stroke="#cf3b2e" strokeWidth="2" />
      <path d="M22 5h3" stroke="#318c49" strokeWidth="2" />
      <path d="M1 8h32l-2 20H3z" fill="#f6e69b" stroke="#d4b95a" />
      <path d="M6 28V17h23v11h-6v-6H12v6z" fill="#9ed5f0" stroke="#5b9cc4" />
    </svg>
  ),
  media: (
    <svg width="28" height="26" viewBox="0 0 28 26">
      <rect x="2" y="2" width="18" height="22" fill="#cddceb" />
      <path d="M22 2v22M25 3v20" stroke="#9ed1ef" strokeWidth="1.500" />
      <circle cx="12" cy="13" r="9.500" fill="#f08122" stroke="#ffd2a0" />
      <path d="M9 7.500v11l8.500-5.500z" fill="#fff" />
    </svg>
  ),
  record: (
    <svg width="32" height="32" viewBox="0 0 32 32">
      <circle cx="16" cy="16" r="14.500" fill="#16181a" stroke="#d9dee3" strokeWidth="2" />
      <path d="M4 13a12 12 0 0 1 24 0q-12-5-24 0z" fill="#484b4f" />
      <circle cx="16" cy="16" r="8" fill="#e90f12" />
    </svg>
  ),
  orb: <svg width="32" height="32" viewBox="0 0 48 48"><Orb /></svg>,
  zip: (
    <svg width="32" height="26" viewBox="0 0 32 26">
      <rect x="1" y="1" width="30" height="24" fill="#fff" stroke="#000" strokeWidth="2" />
      <path d="M5 5h12v16H5z" fill="#000" />
      <path d="M7.500 8.500h7q-3 5-4 10" fill="none" stroke="#fff" strokeWidth="2.500" />
      <path d="M19.500 12h6l-6 7.500h7" fill="none" stroke="#000" strokeWidth="2.300" />
    </svg>
  ),
  console: (
    <svg width="28" height="24" viewBox="0 0 28 24">
      <rect width="28" height="24" fill="#0c0c0c" />
      <path d="M0 1h28" stroke="#d0d6da" strokeWidth="2" strokeDasharray="3 1" />
      <path d="M7 6H4v5h3M9.500 7v1M9.500 10v1M12 5l3 7M17 10.500h7" fill="none" stroke="#e9e9e9" strokeWidth="1.500" />
    </svg>
  ),
  device: (
    <svg width="32" height="30" viewBox="0 0 32 30">
      <path d="M9 2l10-1 4 2v16l-5 3H9z" fill="#dfe2e2" stroke="#999" />
      <path d="M19 1l4 2v16l-4 2z" fill="#b4b9ba" />
      <path d="M11 6h5M12 13q2-2 5 0" fill="none" stroke="#666" strokeWidth="1.300" />
      <path d="M1 18l17 1 3 6-2 4-16-2z" fill="#e6e8e8" stroke="#888" />
      <path d="M3 21h15M4 24h14" stroke="#777" strokeDasharray="2 1" />
      <path d="M21 22l9-3 1 4-8 5z" fill="#697276" />
    </svg>
  ),
};

const tasks: { name: string; state?: "open" | "active" }[] = [
  { name: "ie" },
  { name: "folder", state: "open" },
  { name: "media" },
  { name: "record" },
  { name: "orb", state: "open" },
  { name: "zip", state: "open" },
  { name: "console", state: "open" },
  { name: "device", state: "active" },
];

export default function App() {
  return (
    <Screen>
      <Global />
      <Area>
        <IconGrid>
          {shortcuts.map((s) => (
            <Shortcut key={s.name} $col={s.col} $row={s.row} aria-label={s.label || s.name}>
              <Picture name={s.name} />
              {s.label}
            </Shortcut>
          ))}
        </IconGrid>
        <ArchiveWindow aria-label="Archive manager">
          <ArchiveStatus>
            <ArchiveCell $width={222}>0 / 11 object(s) selected</ArchiveCell>
            <ArchiveCell $width={100} />
            <ArchiveCell $width={100} />
            <ArchiveCell />
          </ArchiveStatus>
        </ArchiveWindow>
        <ExplorerPanel />
        <ManagerPanel />
        <Ghost />
        <Pointer>
          <svg width="13" height="20">
            <path d="M1 1v15l3.500-3.300L7 18.500l2.300-1L7 12h4.700z" fill="#fff" stroke="#222" />
          </svg>
        </Pointer>
      </Area>
      <TaskBar>
        <Tasks>
          {tasks.map((t) => <Task key={t.name} $state={t.state} aria-label={t.name}>{TaskIcons[t.name]}</Task>)}
        </Tasks>
        <Tray>
          <svg width="8" height="6"><path d="M0 5l4-4 4 4z" fill="#fff" /></svg>
          <svg width="16" height="16"><path d="M2.500 1v14" stroke="#fff" strokeWidth="1.500" /><path d="M3 2h6v2h6l-1 3 1 2H9V8H3z" fill="#fff" stroke="#24425f" strokeWidth=".6" /></svg>
          <svg width="16" height="16"><path d="M5.500 3.500h9.500v7H5.500z" fill="#3a6f8c" stroke="#fff" strokeWidth="1.400" /><path d="M10 11v2M6 14h8" stroke="#fff" strokeWidth="1.500" /><path d="M1 1.500h4v4H1zM3 6v8h4" fill="none" stroke="#fff" strokeWidth="1.300" /></svg>
          <svg width="18" height="16"><path d="M1 6h3l4-4v12l-4-4H1z" fill="#fff" /><circle cx="11.500" cy="9.500" r="5.500" fill="#d8433c" /><path d="M9.500 7.500l4 4M13.500 7.500l-4 4" stroke="#fff" strokeWidth="1.500" /></svg>
          <Clock>10:38 AM<br />7/29/2024</Clock>
        </Tray>
      </TaskBar>
    </Screen>
  );
}
